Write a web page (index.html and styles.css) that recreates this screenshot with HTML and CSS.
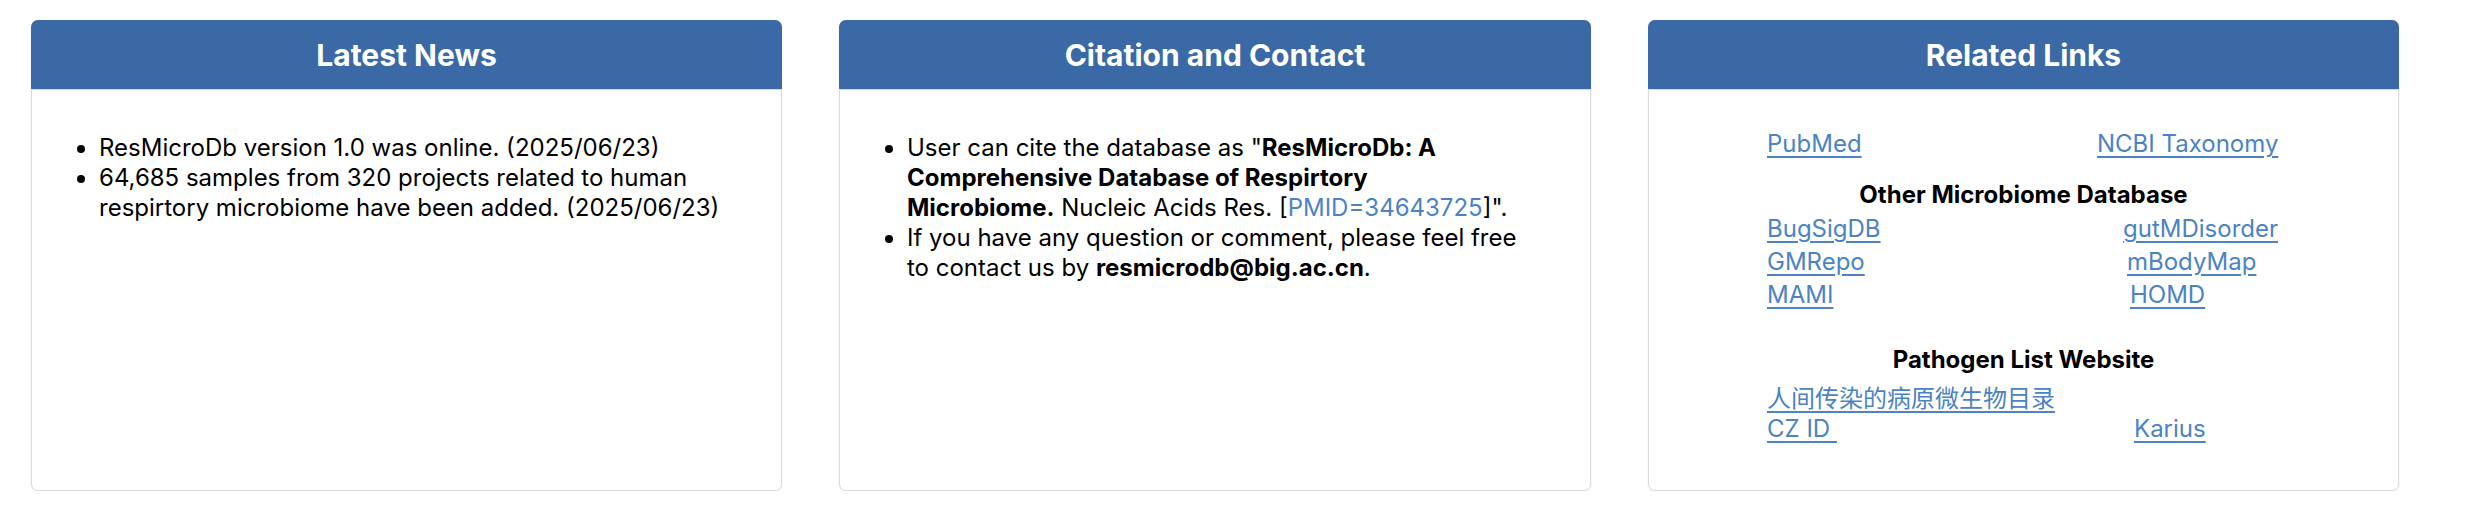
FILE: index.html
```html
<!DOCTYPE html>
<html lang="en">
<head>
<meta charset="utf-8">
<title>ResMicroDb</title>
<link rel="stylesheet" href="styles.css">
</head>
<body>
<div class="row">
  <section class="card">
    <div class="card-header">Latest News</div>
    <div class="card-body news-body">
      <ul class="list">
        <li>ResMicroDb version 1.0 was online. (2025/06/23)</li>
        <li>64,685 samples from 320 projects related to human respirtory microbiome have been added. (2025/06/23)</li>
      </ul>
    </div>
  </section>
  <section class="card">
    <div class="card-header">Citation and Contact</div>
    <div class="card-body cite-body">
      <ul class="list">
        <li>User can cite the database as "<b>ResMicroDb: A Comprehensive Database of Respirtory Microbiome.</b> Nucleic Acids Res. [<a href="#" class="plain">PMID=34643725</a>]".</li>
        <li>If you have any question or comment, please feel free to contact us by <b>resmicrodb@big.ac.cn</b>.</li>
      </ul>
    </div>
  </section>
  <section class="card">
    <div class="card-header">Related Links</div>
    <div class="card-body links-body">
      <div class="link-row first"><a href="#">PubMed</a><a href="#">NCBI Taxonomy</a></div>
      <h5 class="sub">Other Microbiome Database</h5>
      <div class="link-row"><a href="#">BugSigDB</a><a href="#" class="s1">gutMDisorder</a></div>
      <div class="link-row"><a href="#">GMRepo</a><a href="#" class="s2">mBodyMap</a></div>
      <div class="link-row"><a href="#">MAMI</a><a href="#" class="s3">HOMD</a></div>
      <h5 class="sub second">Pathogen List Website</h5>
      <div class="link-row cjk-row"><a href="#" class="cjk">人间传染的病原微生物目录</a></div>
      <div class="link-row"><a href="#">CZ ID&nbsp;</a><a href="#" class="s4">Karius</a></div>
    </div>
  </section>
</div>
</body>
</html>
```
FILE: styles.css
```css
* { box-sizing: border-box; }
html, body { margin: 0; padding: 0; background: #fff; }
body {
  font-family: Inter, "Noto Sans", "Noto Sans CJK SC", sans-serif;
  color: #000;
  font-size: 24px;
  line-height: 30px;
}
.row {
  display: flex;
  gap: 57px;
  padding: 20px 0 0 31px;
}
.card {
  width: 751px;
  height: 471px;
  border: 1px solid #dcdcdc;
  border-radius: 7px;
  box-shadow: 0 1px 2px rgba(0,0,0,0.08);
  background: #fff;
}
.card:nth-child(2) { width: 752px; }
.card-header {
  margin: -1px -1px 0;
  height: 70px;
  background: #3a69a5;
  border-radius: 7px 7px 0 0;
  border-bottom: 1px solid #dcdcdc;
  color: #fff;
  font-weight: 700;
  font-size: 30px;
  display: flex;
  align-items: center;
  justify-content: center;
}
.card-body {
  padding: 43px 62px 0 30px;
}
.news-body { padding-right: 40px; }
.cite-body { padding-right: 71px; }
.list {
  margin: 0;
  padding-left: 37px;
  font-size: 24px;
  line-height: 30px;
}
b { font-weight: 700; }
a {
  color: #4b83c4;
  text-decoration: underline;
  text-underline-offset: 4px;
}
a.plain { text-decoration: none; }
.links-body {
  padding: 37px 0 0 118px;
  line-height: 33px;
}
.link-row {
  display: grid;
  grid-template-columns: 330px auto;
  justify-items: start;
}
.link-row .s1 { margin-left: 26px; }
.link-row .s2 { margin-left: 30px; }
.link-row .s3 { margin-left: 33px; }
.link-row .s4 { margin-left: 37px; }
.sub {
  margin: 18px 0 1px -118px;
  width: 749px;
  text-align: center;
  font-size: 24px;
  font-weight: 700;
  line-height: 33px;
}
.sub.second { margin-top: 32px; margin-bottom: 6px; }
.cjk-row { line-height: 30px; }
.cjk {
  font-family: "Noto Sans CJK SC", sans-serif;
  font-size: 24px;
  grid-column: 1 / span 2;
}
```
